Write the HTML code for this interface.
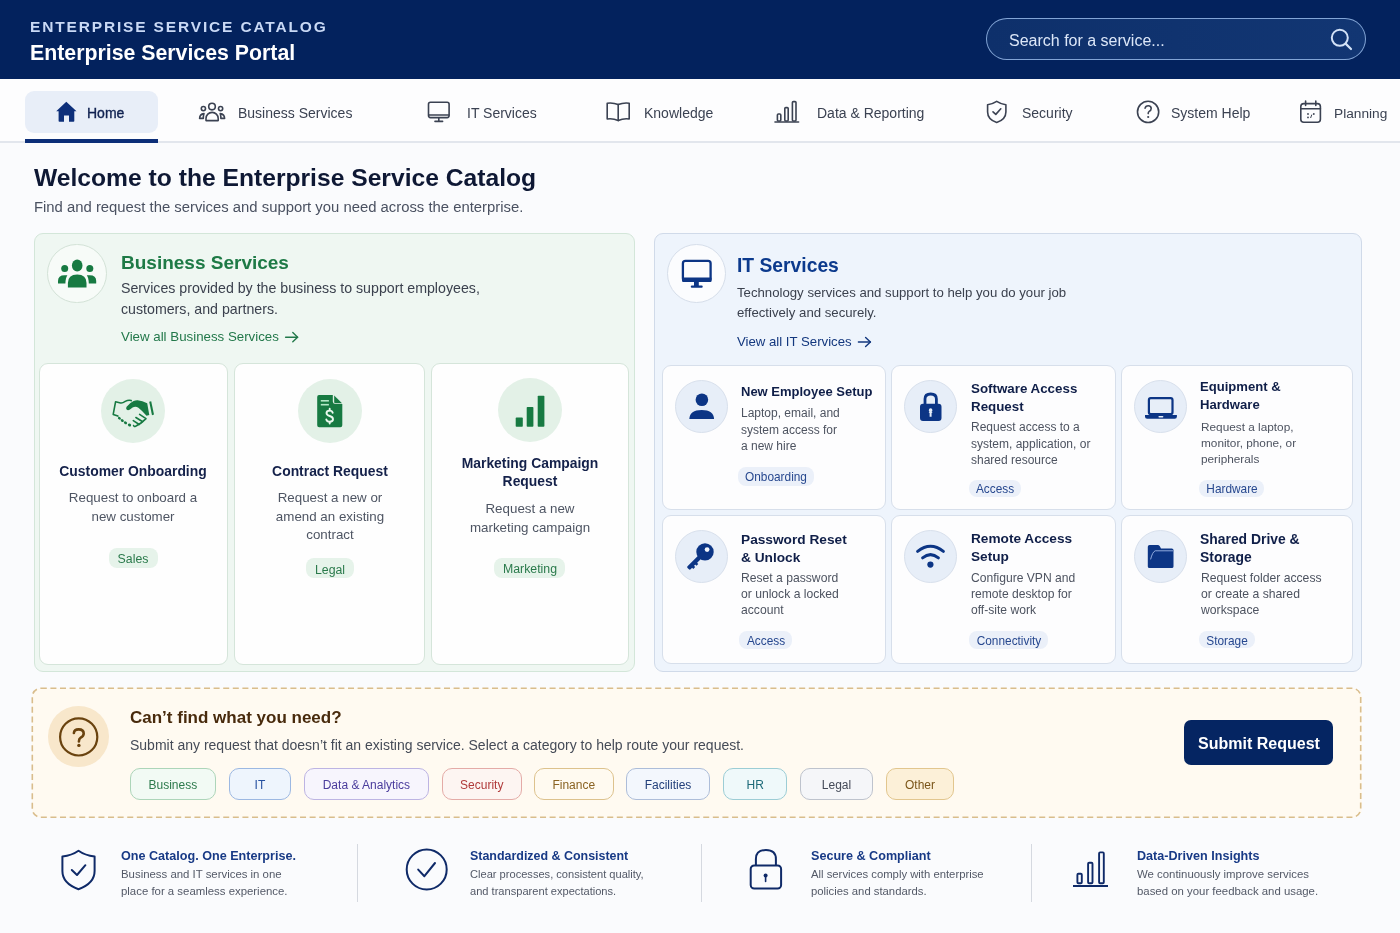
<!DOCTYPE html>
<html><head><meta charset="utf-8"><title>Enterprise Services Portal</title>
<style>
html,body{margin:0;padding:0}
body{width:1400px;height:933px;overflow:hidden;position:relative;background:#fafbfd;font-family:"Liberation Sans",sans-serif}
.t{position:absolute;white-space:nowrap;will-change:transform}
svg{overflow:visible}
</style></head><body>
<div style="position:absolute;left:0.00px;top:0.00px;width:1400.00px;height:79.00px;background:#03225d"></div>
<div class="t" style="left:29.80px;top:17.53px;font-size:15.5px;line-height:18.6px;color:#c9d9f5;font-weight:700;letter-spacing:1.84px;">ENTERPRISE SERVICE CATALOG</div>
<div class="t" style="left:30.00px;top:40.64px;font-size:21.3px;line-height:25.56px;color:#ffffff;font-weight:700;">Enterprise Services Portal</div>
<div style="position:absolute;left:986.00px;top:18.00px;width:380.00px;height:42.00px;border-radius:21px;border:1.3px solid rgba(150,184,232,0.85);box-sizing:border-box;background:linear-gradient(90deg,#0e306b,#123673)"></div>
<div class="t" style="left:1008.60px;top:31.06px;font-size:16px;line-height:19.2px;color:#dce7f8;font-weight:400;">Search for a service...</div>
<svg style="position:absolute;left:1326px;top:24px;" width="30" height="30" viewBox="1326 24 30 30"><circle cx="1339.8" cy="37.8" r="8" fill="none" stroke="#d3e2f7" stroke-width="2"/><path d="M1345.6 43.6 L1351 49" stroke="#d3e2f7" stroke-width="2.2" stroke-linecap="round"/></svg>
<div style="position:absolute;left:0.00px;top:79.00px;width:1400.00px;height:63.00px;background:#fdfdfe"></div>
<div style="position:absolute;left:0.00px;top:141.00px;width:1400.00px;height:1.50px;background:#e2e6ed"></div>
<div style="position:absolute;left:25.00px;top:91.00px;width:133.00px;height:42.00px;background:#e8eef8;border-radius:9px"></div>
<div style="position:absolute;left:25.00px;top:139.00px;width:133.00px;height:3.50px;background:#0c2e78"></div>
<svg style="position:absolute;left:54px;top:100px;" width="25" height="24" viewBox="54 100 25 24"><path d="M66.3 101.8 L56.2 111.2 L58.6 111.2 L58.6 121 Q58.6 121.8 59.4 121.8 L64 121.8 L64 115.6 L69 115.6 L69 121.8 L73.5 121.8 Q74.3 121.8 74.3 121 L74.3 111.2 L76.5 111.2 Z" fill="#0d2f7a"/></svg>
<div class="t" style="left:87.20px;top:104.75px;font-size:14px;line-height:16.8px;color:#0f2150;font-weight:400;-webkit-text-stroke:0.35px #0f2150">Home</div>
<svg style="position:absolute;left:196px;top:99px;" width="32" height="26" viewBox="196 99 32 26"><g fill="none" stroke="#3b4252" stroke-width="1.6" stroke-linecap="round" stroke-linejoin="round"><circle cx="212" cy="106.6" r="3.3"/><circle cx="203.4" cy="108.6" r="2.1"/><circle cx="220.6" cy="108.6" r="2.1"/><path d="M206 120.6 L206 118.5 A6 6 0 0 1 218.2 118.5 L218.2 120.6 Z"/><path d="M204 113.6 Q199.6 114.2 199.6 118.4 L203.3 118.4 Q203.3 115.6 204 113.6 Z"/><path d="M220.2 113.6 Q224.6 114.2 224.6 118.4 L220.9 118.4 Q220.9 115.6 220.2 113.6 Z"/></g></svg>
<div class="t" style="left:238.10px;top:105.35px;font-size:14px;line-height:16.8px;color:#3b4252;font-weight:400;">Business Services</div>
<svg style="position:absolute;left:424px;top:98px;" width="30" height="27" viewBox="424 98 30 27"><g fill="none" stroke="#3b4252" stroke-width="1.6" stroke-linecap="round" stroke-linejoin="round"><rect x="428.5" y="102.3" width="20.6" height="15.3" rx="2"/><path d="M428.8 115 L448.8 115"/><path d="M438.8 117.8 L438.8 121"/><path d="M435 121.4 L442.6 121.4"/></g></svg>
<div class="t" style="left:466.60px;top:105.35px;font-size:14px;line-height:16.8px;color:#3b4252;font-weight:400;">IT Services</div>
<svg style="position:absolute;left:603px;top:99px;" width="30" height="26" viewBox="603 99 30 26"><g fill="none" stroke="#3b4252" stroke-width="1.6" stroke-linecap="round" stroke-linejoin="round"><path d="M618.2 104.6 Q613 102.4 607.2 103.2 L607.2 119 Q613 118.2 618.2 120.6 Q623.4 118.2 629.2 119 L629.2 103.2 Q623.4 102.4 618.2 104.6 Z"/><path d="M618.2 104.6 L618.2 120.6"/></g></svg>
<div class="t" style="left:643.90px;top:105.35px;font-size:14px;line-height:16.8px;color:#3b4252;font-weight:400;">Knowledge</div>
<svg style="position:absolute;left:772px;top:98px;" width="30" height="27" viewBox="772 98 30 27"><g fill="none" stroke="#3b4252" stroke-width="1.6" stroke-linecap="round" stroke-linejoin="round"><rect x="777.4" y="114" width="3.4" height="7" rx="1"/><rect x="784.8" y="107.6" width="3.4" height="13.4" rx="1"/><rect x="792.4" y="101.6" width="3.6" height="19.4" rx="1"/><path d="M775 122 L798.6 122"/></g></svg>
<div class="t" style="left:816.60px;top:105.35px;font-size:14px;line-height:16.8px;color:#3b4252;font-weight:400;">Data &amp; Reporting</div>
<svg style="position:absolute;left:984px;top:98px;" width="26" height="28" viewBox="984 98 26 28"><g fill="none" stroke="#3b4252" stroke-width="1.6" stroke-linecap="round" stroke-linejoin="round"><path d="M996.7 101.3 Q992.5 104 987.6 104.8 L987.6 112 Q987.6 119.5 996.7 122.5 Q1005.9 119.5 1005.9 112 L1005.9 104.8 Q1000.9 104 996.7 101.3 Z"/><path d="M993 111.8 L995.8 114.4 L1000.8 108.8"/></g></svg>
<div class="t" style="left:1021.80px;top:105.35px;font-size:14px;line-height:16.8px;color:#3b4252;font-weight:400;">Security</div>
<svg style="position:absolute;left:1134px;top:98px;" width="28" height="28" viewBox="1134 98 28 28"><g fill="none" stroke="#3b4252" stroke-width="1.6" stroke-linecap="round" stroke-linejoin="round"><circle cx="1148.1" cy="111.9" r="10.6"/><path d="M1145.1 108.2 Q1145.6 105.8 1148.2 105.8 Q1151.2 105.8 1151.2 108.6 Q1151.2 110.4 1149.2 111.4 Q1148.2 112 1148.2 113.6"/></g><circle cx="1148.2" cy="117" r="1.1" fill="#3b4252"/></svg>
<div class="t" style="left:1170.80px;top:105.35px;font-size:14px;line-height:16.8px;color:#3b4252;font-weight:400;">System Help</div>
<svg style="position:absolute;left:1296px;top:98px;" width="28" height="28" viewBox="1296 98 28 28"><g fill="none" stroke="#3b4252" stroke-width="1.6" stroke-linecap="round" stroke-linejoin="round"><rect x="1300.8" y="103.6" width="19.6" height="18.6" rx="3"/><path d="M1301 108.8 L1320.4 108.8"/><path d="M1305.6 101 L1305.6 105.4"/><path d="M1315.8 101 L1315.8 105.4"/></g><g fill="#3b4252"><circle cx="1308" cy="114" r="0.9"/><circle cx="1313.8" cy="114" r="0.9"/><circle cx="1308" cy="117.4" r="0.9"/><path d="M1310.6 118 L1311.8 114.6" stroke="#3b4252" stroke-width="1"/></g></svg>
<div class="t" style="left:1333.60px;top:105.63px;font-size:13.7px;line-height:16.44px;color:#3b4252;font-weight:400;">Planning</div>
<div class="t" style="left:34.20px;top:163.17px;font-size:24.65px;line-height:29.58px;color:#0e1834;font-weight:700;">Welcome to the Enterprise Service Catalog</div>
<div class="t" style="left:34.40px;top:198.84px;font-size:14.85px;line-height:17.82px;color:#4a5161;font-weight:400;">Find and request the services and support you need across the enterprise.</div>
<div style="position:absolute;left:33.50px;top:233.00px;width:601.00px;height:439.00px;background:#eff7f2;border:1px solid #d3e6d9;border-radius:9px;box-sizing:border-box"></div>
<div style="position:absolute;left:47.40px;top:243.60px;width:59.60px;height:59.60px;border-radius:50%;background:#f7fbf8;border:1px solid #d3e2d7;box-sizing:border-box;"></div>
<svg style="position:absolute;left:55px;top:256px;" width="44" height="34" viewBox="55 256 44 34"><g fill="#177a42"><ellipse cx="77.2" cy="265.5" rx="5.3" ry="5.9"/><circle cx="64.7" cy="268.4" r="3.5"/><circle cx="89.8" cy="268.4" r="3.5"/><path d="M67.9 287.4 L67.9 283 Q67.9 274.5 77.2 274.5 Q86.5 274.5 86.5 283 L86.5 287.4 Z"/><path d="M58 283.5 L58 281 Q58 275.2 64.5 275.2 L67.4 275.2 Q65.6 277.5 65.4 283.5 Z"/><path d="M96.2 283.5 L96.2 281 Q96.2 275.2 89.7 275.2 L86.8 275.2 Q88.6 277.5 88.8 283.5 Z"/></g></svg>
<div class="t" style="left:120.90px;top:252.32px;font-size:19px;line-height:22.8px;color:#1e7a46;font-weight:700;">Business Services</div>
<div class="t" style="left:121.20px;top:277.98px;font-size:14.2px;line-height:21px;color:#3b414e;font-weight:400;">Services provided by the business to support employees,<br>customers, and partners.</div>
<div class="t" style="left:121.20px;top:329.01px;font-size:13.3px;line-height:15.96px;color:#22784a;font-weight:400;">View all Business Services</div>
<svg style="position:absolute;left:283px;top:332px;" width="18" height="14" viewBox="283 332 18 14"><g fill="none" stroke="#22784a" stroke-width="1.4" stroke-linecap="round" stroke-linejoin="round"><path d="M285.6 337.2 L297.6 337.2"/><path d="M292.8 332.6 L297.6 337.2 L292.8 341.8"/></g></svg>
<div style="position:absolute;left:38.50px;top:363.00px;width:189.50px;height:302.00px;background:#fefefe;border:1px solid #d5e5da;border-radius:9px;box-sizing:border-box"></div>
<div style="position:absolute;left:234.00px;top:363.00px;width:191.00px;height:302.00px;background:#fefefe;border:1px solid #d5e5da;border-radius:9px;box-sizing:border-box"></div>
<div style="position:absolute;left:430.50px;top:363.00px;width:198.50px;height:302.00px;background:#fefefe;border:1px solid #d5e5da;border-radius:9px;box-sizing:border-box"></div>
<div style="position:absolute;left:101.20px;top:378.80px;width:64.00px;height:64.00px;border-radius:50%;background:#e3f1e7;"></div>
<svg style="position:absolute;left:108px;top:396px;" width="50" height="34" viewBox="108 396 50 34"><g fill="none" stroke="#177a42" stroke-width="1.6" stroke-linejoin="round" stroke-linecap="round"><path d="M131.2 400.6 Q128.6 399.6 125.2 401.4 Q122.4 403.4 120.6 403 L115.6 401.7 L113.2 414.4 L117.9 416.1"/><path d="M139.6 414.4 L146 418.6 Q141.2 423.6 135.6 426.3 Q134 426.9 133.6 425.6"/><path d="M135.9 417.5 L142.7 421.7"/><path d="M133.3 420.7 L139.2 424.5"/></g><g fill="#177a42"><path d="M126.6 409.6 Q125.6 408.2 126.6 406.8 Q130 402.6 133.6 401 Q135.6 400.1 137.6 400.2 Q142.4 400.9 147.2 403.3 L149.3 415.1 L146.5 415.8 Q142 410.6 138.4 407.8 Q135.8 405.8 132.6 407.4 L129.6 409.8 Q127.8 410.8 126.6 409.6 Z"/><path d="M149.2 401.7 L151.2 401.2 L154 414.4 L152 415.3 Z"/><ellipse cx="119.4" cy="418.3" rx="1.6" ry="1.25" transform="rotate(35 119.4 418.3)"/><ellipse cx="122.3" cy="420.6" rx="1.6" ry="1.3" transform="rotate(35 122.3 420.6)"/><ellipse cx="125.5" cy="422.8" rx="1.7" ry="1.35" transform="rotate(35 125.5 422.8)"/><ellipse cx="129.5" cy="425" rx="1.7" ry="1.4" transform="rotate(35 129.5 425)"/></g></svg>
<div class="t" style="left:38.40px;width:190px;text-align:center;top:462.94px;font-size:13.9px;line-height:16.68px;color:#14214a;font-weight:700;">Customer Onboarding</div>
<div class="t" style="left:38.40px;width:190px;text-align:center;top:489.02px;font-size:13.35px;line-height:18.5px;color:#4e5563;font-weight:400;">Request to onboard a<br>new customer</div>
<div style="position:absolute;left:108.60px;top:547.70px;width:49.50px;height:20.50px;background:#e6f3ea;border-radius:8px"></div>
<div class="t" style="left:103.40px;width:60px;text-align:center;top:552.16px;font-size:12.3px;line-height:14.76px;color:#2a7a4b;font-weight:400;">Sales</div>
<div style="position:absolute;left:298.00px;top:378.80px;width:64.00px;height:64.00px;border-radius:50%;background:#e3f1e7;"></div>
<svg style="position:absolute;left:314px;top:392px;" width="32" height="38" viewBox="314 392 32 38"><path d="M319 395 L332.8 395 L332.8 401.6 Q332.8 404 335.2 404 L342.3 404 L342.3 425.2 Q342.3 427.2 340.3 427.2 L319.2 427.2 Q317.2 427.2 317.2 425.2 L317.2 397 Q317.2 395 319 395 Z" fill="#177a42"/><path d="M334.2 395.6 L342 403.2 L335.4 403.2 Q334.2 403.2 334.2 402 Z" fill="#177a42"/><g stroke="#b3e8c6" stroke-width="1.6"><path d="M320.8 400.8 L328.9 400.8"/><path d="M320.8 404.7 L328.9 404.7"/></g><g fill="none" stroke="#eaf8ee" stroke-width="1.9" stroke-linecap="round"><path d="M332.7 412.8 Q332.2 410.6 329.7 410.6 Q326.5 410.6 326.5 413.1 Q326.5 415.1 329.7 416 Q333 416.9 333 419.3 Q333 421.7 329.7 421.7 Q326.9 421.7 326.3 419.5"/><path d="M329.7 408.7 L329.7 410.4 M329.7 421.9 L329.7 423.5"/></g></svg>
<div class="t" style="left:234.50px;width:190px;text-align:center;top:462.94px;font-size:13.9px;line-height:16.68px;color:#14214a;font-weight:700;">Contract Request</div>
<div class="t" style="left:234.50px;width:190px;text-align:center;top:489.02px;font-size:13.35px;line-height:18.5px;color:#4e5563;font-weight:400;">Request a new or<br>amend an existing<br>contract</div>
<div style="position:absolute;left:305.50px;top:557.80px;width:48.10px;height:20.20px;background:#e6f3ea;border-radius:8px"></div>
<div class="t" style="left:299.50px;width:60px;text-align:center;top:562.66px;font-size:12.3px;line-height:14.76px;color:#2a7a4b;font-weight:400;">Legal</div>
<div style="position:absolute;left:498.20px;top:378.40px;width:64.00px;height:64.00px;border-radius:50%;background:#e3f1e7;"></div>
<svg style="position:absolute;left:512px;top:392px;" width="36" height="38" viewBox="512 392 36 38"><g fill="#177a42"><rect x="515.7" y="417.6" width="7.1" height="9.2" rx="0.8"/><rect x="526.7" y="407" width="6.7" height="19.8" rx="0.8"/><rect x="537.7" y="395.7" width="6.7" height="31.1" rx="0.8"/></g></svg>
<div class="t" style="left:430.75px;width:198px;text-align:center;top:455.48px;font-size:13.9px;line-height:17.6px;color:#14214a;font-weight:700;">Marketing Campaign<br>Request</div>
<div class="t" style="left:430.75px;width:198px;text-align:center;top:500.22px;font-size:13.35px;line-height:18.5px;color:#4e5563;font-weight:400;">Request a new<br>marketing campaign</div>
<div style="position:absolute;left:494.20px;top:557.70px;width:71.00px;height:20.30px;background:#e6f3ea;border-radius:8px"></div>
<div class="t" style="left:489.70px;width:80px;text-align:center;top:562.46px;font-size:12.3px;line-height:14.76px;color:#2a7a4b;font-weight:400;">Marketing</div>
<div style="position:absolute;left:654.00px;top:233.00px;width:707.50px;height:438.50px;background:#eef4fc;border:1px solid #d0dae9;border-radius:9px;box-sizing:border-box"></div>
<div style="position:absolute;left:666.70px;top:243.70px;width:59.40px;height:59.40px;border-radius:50%;background:#fbfcfe;border:1px solid #d6deea;box-sizing:border-box;"></div>
<svg style="position:absolute;left:679px;top:257px;" width="36" height="34" viewBox="679 257 36 34"><rect x="682.9" y="260.8" width="27.7" height="20" rx="2.6" fill="none" stroke="#0c3585" stroke-width="2.3"/><rect x="682" y="277.6" width="29.6" height="4.3" rx="1.2" fill="#0c3585"/><rect x="694" y="281.5" width="4.8" height="4.6" fill="#0c3585"/><rect x="690.8" y="285.6" width="11.9" height="2.2" rx="1" fill="#0c3585"/></svg>
<div class="t" style="left:737.20px;top:253.73px;font-size:19.3px;line-height:23.16px;color:#0c3a8d;font-weight:700;">IT Services</div>
<div class="t" style="left:737.40px;top:282.98px;font-size:13.2px;line-height:20.3px;color:#3b414e;font-weight:400;">Technology services and support to help you do your job<br>effectively and securely.</div>
<div class="t" style="left:737.40px;top:334.11px;font-size:13.2px;line-height:15.84px;color:#13377e;font-weight:400;">View all IT Services</div>
<svg style="position:absolute;left:856px;top:337px;" width="18" height="14" viewBox="856 337 18 14"><g fill="none" stroke="#13377e" stroke-width="1.4" stroke-linecap="round" stroke-linejoin="round"><path d="M858.4 342 L870.4 342"/><path d="M865.6 337.4 L870.4 342 L865.6 346.6"/></g></svg>
<div style="position:absolute;left:661.50px;top:365.00px;width:224.00px;height:144.50px;background:#fdfdfe;border:1px solid #d7dfeb;border-radius:9px;box-sizing:border-box"></div>
<div style="position:absolute;left:661.50px;top:514.50px;width:224.00px;height:149.50px;background:#fdfdfe;border:1px solid #d7dfeb;border-radius:9px;box-sizing:border-box"></div>
<div style="position:absolute;left:890.50px;top:365.00px;width:225.00px;height:144.50px;background:#fdfdfe;border:1px solid #d7dfeb;border-radius:9px;box-sizing:border-box"></div>
<div style="position:absolute;left:890.50px;top:514.50px;width:225.00px;height:149.50px;background:#fdfdfe;border:1px solid #d7dfeb;border-radius:9px;box-sizing:border-box"></div>
<div style="position:absolute;left:1121.00px;top:365.00px;width:232.00px;height:144.50px;background:#fdfdfe;border:1px solid #d7dfeb;border-radius:9px;box-sizing:border-box"></div>
<div style="position:absolute;left:1121.00px;top:514.50px;width:232.00px;height:149.50px;background:#fdfdfe;border:1px solid #d7dfeb;border-radius:9px;box-sizing:border-box"></div>
<div style="position:absolute;left:675.30px;top:380.20px;width:53.00px;height:53.00px;border-radius:50%;background:#e7eef8;border:1px solid #d8e0ec;box-sizing:border-box;"></div>
<svg style="position:absolute;left:686px;top:390px;" width="32" height="32" viewBox="686 390 32 32"><g fill="#0c3585"><circle cx="701.9" cy="399.8" r="6.3"/><path d="M689.3 419 Q689.8 410 701.7 410 Q713.6 410 714.1 419 Z"/></g></svg>
<div class="t" style="left:740.60px;top:384.10px;font-size:13px;line-height:15.6px;color:#0f1e48;font-weight:700;">New Employee Setup</div>
<div class="t" style="left:740.80px;top:405.49px;font-size:12px;line-height:16.5px;color:#4d5360;font-weight:400;">Laptop, email, and<br>system access for<br>a new hire</div>
<div style="position:absolute;left:738.20px;top:467.00px;width:75.80px;height:18.50px;background:#ebf0f9;border-radius:8px"></div>
<div class="t" style="left:731.10px;width:90px;text-align:center;top:470.08px;font-size:11.85px;line-height:14.22px;color:#27488f;font-weight:400;">Onboarding</div>
<div style="position:absolute;left:904.40px;top:380.20px;width:53.00px;height:53.00px;border-radius:50%;background:#e7eef8;border:1px solid #d8e0ec;box-sizing:border-box;"></div>
<svg style="position:absolute;left:916px;top:388px;" width="30" height="36" viewBox="916 388 30 36"><path d="M925 404 L925 399 Q925 394 930.7 394 Q936.4 394 936.4 399 L936.4 404" fill="none" stroke="#0c3585" stroke-width="2.8"/><path d="M923 403.8 L938.5 403.8 Q941.5 403.8 941.5 406.8 L941.5 418 Q941.5 421 938.5 421 L923 421 Q920 421 920 418 L920 406.8 Q920 403.8 923 403.8 Z M930.6 408.3 Q928.8 408.3 928.8 410.2 Q928.8 411.3 929.6 411.8 L928.6 412.6 L929.6 412.9 L929.6 416.8 L931.6 416.8 L931.6 412.9 L932.6 412.6 L931.6 411.8 Q932.4 411.3 932.4 410.2 Q932.4 408.3 930.6 408.3 Z" fill="#0c3585" fill-rule="evenodd"/></svg>
<div class="t" style="left:970.60px;top:380.42px;font-size:13.35px;line-height:17.7px;color:#0f1e48;font-weight:700;">Software Access<br>Request</div>
<div class="t" style="left:970.80px;top:419.49px;font-size:12px;line-height:16.5px;color:#4d5360;font-weight:400;">Request access to a<br>system, application, or<br>shared resource</div>
<div style="position:absolute;left:969.20px;top:479.70px;width:52.00px;height:17.30px;background:#ebf0f9;border-radius:8px"></div>
<div class="t" style="left:960.20px;width:70px;text-align:center;top:482.28px;font-size:11.85px;line-height:14.22px;color:#27488f;font-weight:400;">Access</div>
<div style="position:absolute;left:1134.40px;top:380.10px;width:53.00px;height:53.00px;border-radius:50%;background:#e7eef8;border:1px solid #d8e0ec;box-sizing:border-box;"></div>
<svg style="position:absolute;left:1142px;top:392px;" width="38" height="30" viewBox="1142 392 38 30"><rect x="1148.9" y="398.1" width="23.6" height="16" rx="1.8" fill="none" stroke="#0c3585" stroke-width="2.2"/><path d="M1145 415 L1176.9 415 L1176.9 416.6 Q1176.9 418.8 1174.7 418.8 L1147.2 418.8 Q1145 418.8 1145 416.6 Z" fill="#0c3585"/><rect x="1158.4" y="416" width="5" height="1.6" rx="0.8" fill="#e7eef8"/></svg>
<div class="t" style="left:1200.40px;top:378.06px;font-size:13.1px;line-height:17.8px;color:#0f1e48;font-weight:700;">Equipment &amp;<br>Hardware</div>
<div class="t" style="left:1200.60px;top:418.79px;font-size:11.8px;line-height:16.05px;color:#4d5360;font-weight:400;">Request a laptop,<br>monitor, phone, or<br>peripherals</div>
<div style="position:absolute;left:1199.00px;top:479.70px;width:65.30px;height:17.00px;background:#ebf0f9;border-radius:8px"></div>
<div class="t" style="left:1191.60px;width:80px;text-align:center;top:482.08px;font-size:11.85px;line-height:14.22px;color:#27488f;font-weight:400;">Hardware</div>
<div style="position:absolute;left:675.30px;top:529.60px;width:53.00px;height:53.00px;border-radius:50%;background:#e7eef8;border:1px solid #d8e0ec;box-sizing:border-box;"></div>
<svg style="position:absolute;left:684px;top:538px;" width="34" height="34" viewBox="684 538 34 34"><g fill="#0c3585"><circle cx="705" cy="551.9" r="8.7"/><g transform="rotate(45 705 551.9)"><rect x="702.8" y="553" width="4.4" height="22.6" rx="1.2"/><rect x="706" y="565.2" width="2.8" height="2.6"/><rect x="706" y="569.6" width="2.8" height="2.6"/></g></g><circle cx="707.1" cy="549.6" r="2.4" fill="#f2f6fc"/></svg>
<div class="t" style="left:740.60px;top:530.80px;font-size:13.7px;line-height:17.7px;color:#0f1e48;font-weight:700;">Password Reset<br>&amp; Unlock</div>
<div class="t" style="left:740.80px;top:570.19px;font-size:12.15px;line-height:16px;color:#4d5360;font-weight:400;">Reset a password<br>or unlock a locked<br>account</div>
<div style="position:absolute;left:739.20px;top:631.20px;width:52.80px;height:17.80px;background:#ebf0f9;border-radius:8px"></div>
<div class="t" style="left:730.60px;width:70px;text-align:center;top:634.28px;font-size:11.85px;line-height:14.22px;color:#27488f;font-weight:400;">Access</div>
<div style="position:absolute;left:904.20px;top:529.60px;width:53.00px;height:53.00px;border-radius:50%;background:#e7eef8;border:1px solid #d8e0ec;box-sizing:border-box;"></div>
<svg style="position:absolute;left:912px;top:540px;" width="38" height="30" viewBox="912 540 38 30"><g fill="none" stroke="#0c3585" stroke-width="3" stroke-linecap="round"><path d="M917.6 551.4 Q930.5 541.2 943.4 551.4"/><path d="M922.6 557.8 Q930.5 551.4 938.4 557.8"/></g><circle cx="930.4" cy="564.6" r="3.1" fill="#0c3585"/></svg>
<div class="t" style="left:970.60px;top:529.57px;font-size:13.65px;line-height:18.2px;color:#0f1e48;font-weight:700;">Remote Access<br>Setup</div>
<div class="t" style="left:970.80px;top:569.71px;font-size:12.1px;line-height:16px;color:#4d5360;font-weight:400;">Configure VPN and<br>remote desktop for<br>off-site work</div>
<div style="position:absolute;left:969.20px;top:631.20px;width:79.30px;height:17.80px;background:#ebf0f9;border-radius:8px"></div>
<div class="t" style="left:963.90px;width:90px;text-align:center;top:634.28px;font-size:11.85px;line-height:14.22px;color:#27488f;font-weight:400;">Connectivity</div>
<div style="position:absolute;left:1134.40px;top:529.60px;width:53.00px;height:53.00px;border-radius:50%;background:#e7eef8;border:1px solid #d8e0ec;box-sizing:border-box;"></div>
<svg style="position:absolute;left:1144px;top:542px;" width="34" height="30" viewBox="1144 542 34 30"><path d="M1149.6 545 L1157.6 545 Q1159 545 1159.8 546.2 L1161 548.4 L1171.8 548.4 Q1173.5 548.4 1173.5 550 L1173.5 566.4 Q1173.5 568 1171.8 568 L1149.5 568 Q1147.8 568 1147.8 566.4 L1147.8 546.8 Q1147.8 545 1149.6 545 Z" fill="#0c3585"/><path d="M1150.6 559.4 Q1152.4 552 1155.2 550.8 L1173 550.8" fill="none" stroke="#9fb8e6" stroke-width="0.9"/></svg>
<div class="t" style="left:1200.40px;top:531.28px;font-size:13.9px;line-height:17.6px;color:#0f1e48;font-weight:700;">Shared Drive &amp;<br>Storage</div>
<div class="t" style="left:1200.60px;top:570.15px;font-size:12.2px;line-height:16.05px;color:#4d5360;font-weight:400;">Request folder access<br>or create a shared<br>workspace</div>
<div style="position:absolute;left:1199.00px;top:631.20px;width:56.40px;height:16.50px;background:#ebf0f9;border-radius:8px"></div>
<div class="t" style="left:1192.20px;width:70px;text-align:center;top:633.98px;font-size:11.85px;line-height:14.22px;color:#27488f;font-weight:400;">Storage</div>
<div style="position:absolute;left:31.50px;top:687.50px;width:1330.00px;height:130.50px;background:#fffaf1;border-radius:9px"></div>
<svg style="position:absolute;left:30px;top:686px;" width="1334" height="134" viewBox="30 686 1334 134"><rect x="32.3" y="688.3" width="1328.4" height="128.9" rx="8.5" fill="none" stroke="#d9bd8c" stroke-width="1.6" stroke-dasharray="6 3.6"/></svg>
<div style="position:absolute;left:48.35px;top:706.35px;width:60.50px;height:60.50px;border-radius:50%;background:#f8e7cb;"></div>
<svg style="position:absolute;left:56px;top:714px;" width="46" height="46" viewBox="56 714 46 46"><circle cx="78.7" cy="736.9" r="18.6" fill="none" stroke="#6a430f" stroke-width="2.2"/><path d="M73.9 733 Q74.2 729.4 78.6 729.4 Q83.7 729.4 83.7 733.6 Q83.7 736.2 80.7 737.7 Q78.9 738.7 78.9 741.4" fill="none" stroke="#6a430f" stroke-width="2.6" stroke-linecap="round"/><circle cx="78.9" cy="745.4" r="1.7" fill="#6a430f"/></svg>
<div class="t" style="left:130.10px;top:707.51px;font-size:17px;line-height:20.4px;color:#482a0c;font-weight:700;">Can’t find what you need?</div>
<div class="t" style="left:130.40px;top:736.95px;font-size:14px;line-height:16.8px;color:#454b57;font-weight:400;">Submit any request that doesn’t fit an existing service. Select a category to help route your request.</div>
<div style="position:absolute;left:130.00px;top:768.00px;width:85.70px;height:32.30px;background:#f2faf4;border:1px solid #add5b9;border-radius:10px;box-sizing:border-box"></div>
<div class="t" style="left:130.00px;width:85.69999999999999px;text-align:center;top:778.14px;font-size:12px;line-height:14.4px;color:#2d7a4c;font-weight:400;">Business</div>
<div style="position:absolute;left:229.10px;top:768.00px;width:61.80px;height:32.30px;background:#eef5fd;border:1px solid #9cb8e2;border-radius:10px;box-sizing:border-box"></div>
<div class="t" style="left:229.10px;width:61.79999999999998px;text-align:center;top:778.14px;font-size:12px;line-height:14.4px;color:#2550a0;font-weight:400;">IT</div>
<div style="position:absolute;left:304.30px;top:768.00px;width:124.80px;height:32.30px;background:#f7f5fd;border:1px solid #bdb4e3;border-radius:10px;box-sizing:border-box"></div>
<div class="t" style="left:304.30px;width:124.80000000000001px;text-align:center;top:778.14px;font-size:12px;line-height:14.4px;color:#4a3c9c;font-weight:400;">Data &amp; Analytics</div>
<div style="position:absolute;left:442.10px;top:768.00px;width:79.50px;height:32.30px;background:#fdf5f2;border:1px solid #e4aba7;border-radius:10px;box-sizing:border-box"></div>
<div class="t" style="left:442.10px;width:79.5px;text-align:center;top:778.14px;font-size:12px;line-height:14.4px;color:#b03a3a;font-weight:400;">Security</div>
<div style="position:absolute;left:534.10px;top:768.00px;width:79.50px;height:32.30px;background:#fffaf0;border:1px solid #ddc28d;border-radius:10px;box-sizing:border-box"></div>
<div class="t" style="left:534.10px;width:79.5px;text-align:center;top:778.14px;font-size:12px;line-height:14.4px;color:#8a6322;font-weight:400;">Finance</div>
<div style="position:absolute;left:626.10px;top:768.00px;width:84.00px;height:32.30px;background:#f3f7fd;border:1px solid #adbdd9;border-radius:10px;box-sizing:border-box"></div>
<div class="t" style="left:626.10px;width:84.0px;text-align:center;top:778.14px;font-size:12px;line-height:14.4px;color:#23407b;font-weight:400;">Facilities</div>
<div style="position:absolute;left:722.60px;top:768.00px;width:64.30px;height:32.30px;background:#eff9fa;border:1px solid #9ccdd5;border-radius:10px;box-sizing:border-box"></div>
<div class="t" style="left:722.60px;width:64.29999999999995px;text-align:center;top:778.14px;font-size:12px;line-height:14.4px;color:#1e6b79;font-weight:400;">HR</div>
<div style="position:absolute;left:799.80px;top:768.00px;width:73.00px;height:32.30px;background:#f5f6f9;border:1px solid #bec3cd;border-radius:10px;box-sizing:border-box"></div>
<div class="t" style="left:799.80px;width:73.0px;text-align:center;top:778.14px;font-size:12px;line-height:14.4px;color:#444a58;font-weight:400;">Legal</div>
<div style="position:absolute;left:886.10px;top:768.00px;width:68.10px;height:32.30px;background:#fcf0d8;border:1px solid #e2c68e;border-radius:10px;box-sizing:border-box"></div>
<div class="t" style="left:886.10px;width:68.10000000000002px;text-align:center;top:778.14px;font-size:12px;line-height:14.4px;color:#7a5519;font-weight:400;">Other</div>
<div style="position:absolute;left:1184.30px;top:720.40px;width:148.30px;height:44.40px;background:#052562;border-radius:7px"></div>
<div class="t" style="left:1184.50px;width:148px;text-align:center;top:734.36px;font-size:16px;line-height:19.2px;color:#ffffff;font-weight:700;">Submit Request</div>
<svg style="position:absolute;left:58px;top:846px;" width="42" height="48" viewBox="58 846 42 48"><g fill="none" stroke="#0f2a68" stroke-width="2" stroke-linecap="round" stroke-linejoin="round"><path d="M78.5 850.8 Q72 855.4 62.4 856.6 L62.4 871 Q62.4 883.4 78.5 889.2 Q94.6 883.4 94.6 871 L94.6 856.6 Q85 855.4 78.5 850.8 Z"/><path d="M71.8 870 L77 875 L85.4 865.2"/></g></svg>
<div class="t" style="left:121.00px;top:848.97px;font-size:12.6px;line-height:15.12px;color:#183a86;font-weight:700;">One Catalog. One Enterprise.</div>
<div class="t" style="left:121.40px;top:866.35px;font-size:11.4px;line-height:17.2px;color:#535967;font-weight:400;">Business and IT services in one<br>place for a seamless experience.</div>
<div style="position:absolute;left:357.00px;top:843.50px;width:1.20px;height:58.50px;background:#d5d9e0"></div>
<svg style="position:absolute;left:402px;top:845px;" width="50" height="50" viewBox="402 845 50 50"><circle cx="426.7" cy="869.5" r="20" fill="none" stroke="#0f2a68" stroke-width="2"/><path d="M418.2 869.6 L424.4 876.2 L435 863" fill="none" stroke="#0f2a68" stroke-width="2" stroke-linecap="round" stroke-linejoin="round"/></svg>
<div class="t" style="left:469.90px;top:849.12px;font-size:12.45px;line-height:14.94px;color:#183a86;font-weight:700;">Standardized &amp; Consistent</div>
<div class="t" style="left:470.40px;top:866.45px;font-size:11.1px;line-height:17.2px;color:#535967;font-weight:400;">Clear processes, consistent quality,<br>and transparent expectations.</div>
<div style="position:absolute;left:701.00px;top:843.50px;width:1.20px;height:58.50px;background:#d5d9e0"></div>
<svg style="position:absolute;left:746px;top:846px;" width="40" height="48" viewBox="746 846 40 48"><g fill="none" stroke="#0f2a68" stroke-width="2"><path d="M755.9 865.4 L755.9 859 Q755.9 850 765.9 850 Q775.9 850 775.9 859 L775.9 865.4"/><rect x="750.7" y="865.4" width="30.4" height="23.2" rx="3.5"/></g><circle cx="765.6" cy="875.4" r="2" fill="#0f2a68"/><path d="M765.6 876 L765.6 881.5" stroke="#0f2a68" stroke-width="1.6" stroke-linecap="round"/></svg>
<div class="t" style="left:811.00px;top:848.97px;font-size:12.6px;line-height:15.12px;color:#183a86;font-weight:700;">Secure &amp; Compliant</div>
<div class="t" style="left:811.40px;top:866.38px;font-size:11.3px;line-height:17.2px;color:#535967;font-weight:400;">All services comply with enterprise<br>policies and standards.</div>
<div style="position:absolute;left:1030.50px;top:843.50px;width:1.20px;height:58.50px;background:#d5d9e0"></div>
<svg style="position:absolute;left:1070px;top:848px;" width="42" height="42" viewBox="1070 848 42 42"><g fill="none" stroke="#0f2a68" stroke-width="1.9"><rect x="1077.4" y="873.8" width="4.4" height="9.4" rx="1"/><rect x="1088.1" y="862.8" width="4.4" height="20.4" rx="1"/><rect x="1099.1" y="852.4" width="4.7" height="30.8" rx="1"/></g><path d="M1073 886 L1108 886" stroke="#0f2a68" stroke-width="2.2"/></svg>
<div class="t" style="left:1137.20px;top:848.97px;font-size:12.6px;line-height:15.12px;color:#183a86;font-weight:700;">Data-Driven Insights</div>
<div class="t" style="left:1136.80px;top:866.35px;font-size:11.4px;line-height:17.2px;color:#535967;font-weight:400;">We continuously improve services<br>based on your feedback and usage.</div>
</body></html>
